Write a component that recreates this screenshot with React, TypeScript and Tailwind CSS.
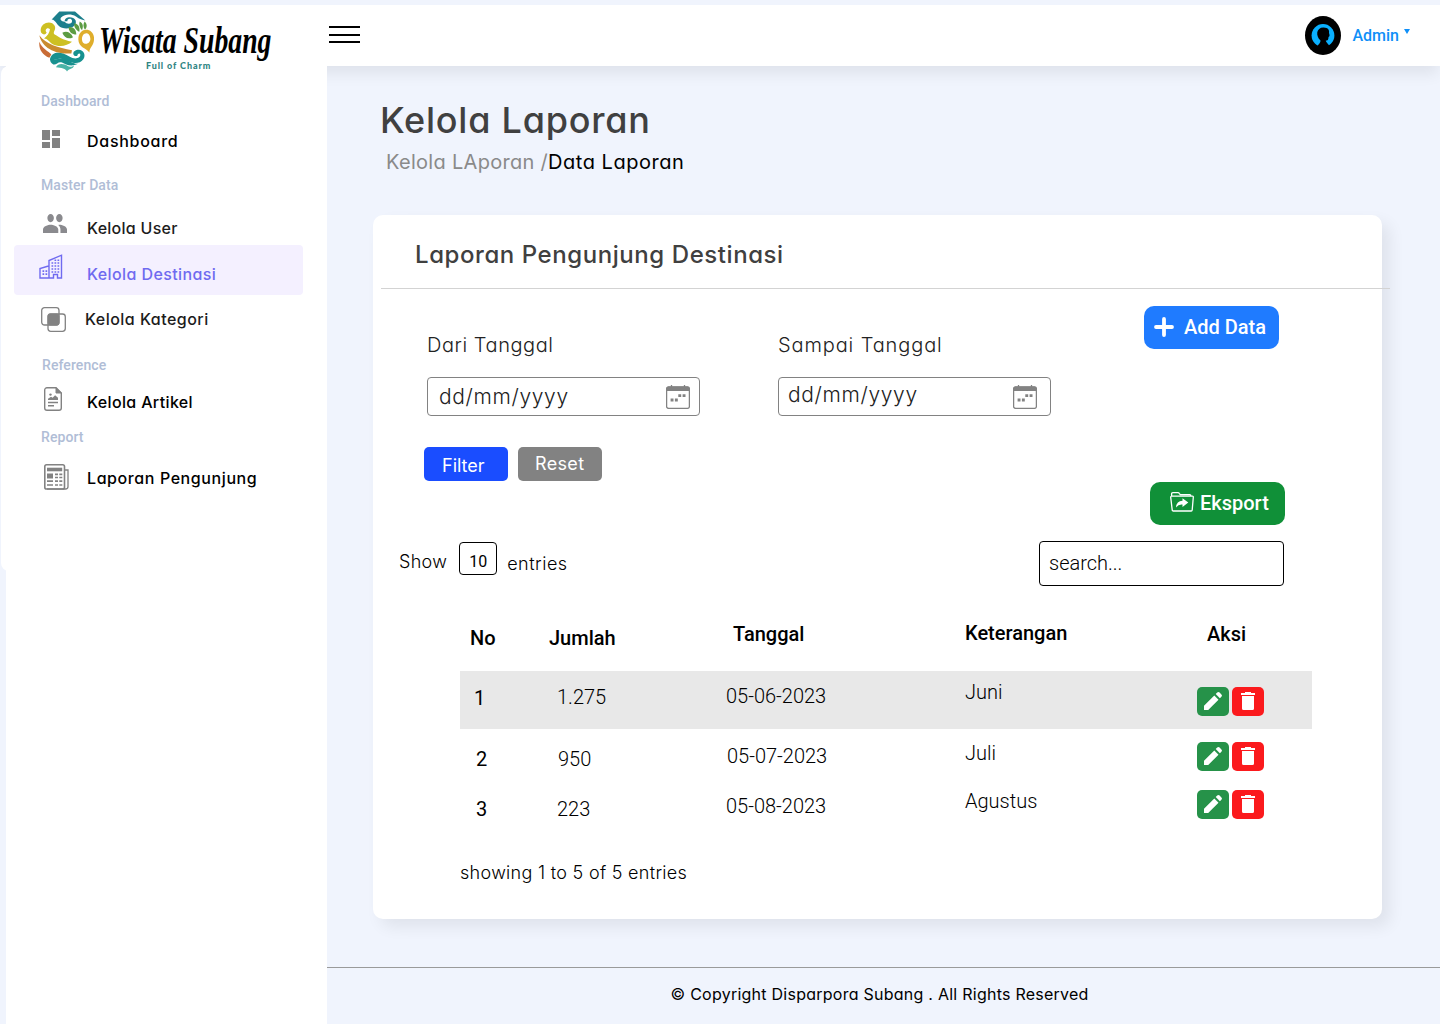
import React from "react";
import type { ReactNode } from "react";

function T({ className = "", children }: { className?: string; children: ReactNode }) {
  return <span className={"block w-max whitespace-nowrap " + className}>{children}</span>;
}

function LogoMark() {
  return (
    <svg viewBox="27 20 165 182" className="h-[61px] w-[55px] shrink-0" fill="none">
      <path d="M65 45 88 21H135L166 48C158 46 148 44 138 36C124 28 106 28 94 38C88 44 94 50 104 52C110 60 128 60 126 48C124 40 112 42 112 50L104 50C104 36 130 34 137 48C142 66 118 76 96 70C80 64 78 46 65 45Z" fill="#1c7f8c" />
      <path d="M32 78C32 52 66 46 74 64C80 76 66 84 74 90C86 96 96 106 126 112C112 126 84 128 68 119C56 112 54 102 42 102C52 94 58 86 60 74C52 66 42 76 50 84C46 94 32 90 32 78Z" fill="#cdc022" />
      <path d="M97 85C110 78 122 84 129 98C116 106 102 100 97 85ZM116 68C130 66 139 76 139 90C126 90 116 82 116 68ZM133 56C145 58 151 68 148 82C138 76 131 68 133 56ZM149 51C159 56 161 66 156 77C149 70 146 60 149 51ZM164 51C172 58 172 68 165 76C159 68 159 58 164 51Z" fill="#5c9c43" />
      <path fillRule="evenodd" d="M192 98C194 124 179 126 178 144C170 130 145 130 145 104C145 68 188 66 192 98ZM171 86C153 84 150 118 168 118C176 118 182 110 181 102C180 94 178 88 171 86Z" fill="#dfae2c" />
      <path d="M28 92C48 120 84 128 126 137L124 147C80 150 36 132 28 92Z" fill="#c98b2f" />
      <path d="M28 112C36 134 56 140 64 150L58 160C36 150 26 134 28 112Z" fill="#c96c36" />
      <path d="M60 164C66 138 96 142 118 156C134 166 152 162 151 150C149 144 142 148 142 154C130 158 124 142 138 137C158 130 170 150 160 164C144 186 114 170 98 164C84 160 76 166 64 168Z" fill="#17918f" />
      <path d="M60 162C72 168 82 162 98 162C116 164 122 178 144 178C122 188 108 180 96 174C84 170 80 182 70 180C62 176 60 170 60 162Z" fill="#17918f" />
      <path d="M78 188C84 174 104 178 112 184C118 188 126 188 132 182C130 196 116 190 111 201C108 192 94 190 78 188Z" fill="#48b3a6" />
    </svg>
  );
}

const icons = {
  dashboard: (
    <svg viewBox="0 0 18 18" className="mt-[8px] ml-[2px] h-[18px] w-[18px]" fill="#828282">
      <path d="M0 10h8V0H0zM0 18h8v-6H0zM10 18h8V8h-8zM10 0v6h8V0z" />
    </svg>
  ),
  people: (
    <svg viewBox="1 5 22 14" preserveAspectRatio="none" className="mt-[6px] ml-[3px] h-[19px] w-[24px]" fill="#8a8a8e">
      <path d="M16 11c1.66 0 2.99-1.34 2.99-3S17.66 5 16 5s-3 1.34-3 3 1.34 3 3 3m-8 0c1.66 0 2.99-1.34 2.99-3S9.66 5 8 5 5 6.34 5 8s1.34 3 3 3m0 2c-2.330 0-7 1.170-7 3.500V19h14v-2.500c0-2.330-4.670-3.500-7-3.500m8 0c-.290 0-.620.020-.970.050 1.160.840 1.970 1.970 1.970 3.450V19h6v-2.500c0-2.330-4.670-3.500-7-3.500" />
    </svg>
  ),
  buildings: (
    <svg viewBox="0 0 24 25" className="mt-[9px] -ml-px h-[25px] w-[24px]" fill="none" stroke="#6f6af0">
      <path d="M10 24H1V14.500L9.500 12M10 24V6.500L22.500 1.200V24H18.500V20.500H14.500V24H10Z" strokeWidth="1.400" />
      <path d="M3.500 17.200h5M3.500 20.200h5M12.500 9h8M12.500 12h8M12.500 15h8M12.500 18h8" strokeWidth="1.700" strokeDasharray="1.700 1.300" />
      <path d="M15.500 6.200h5" strokeWidth="1.500" strokeDasharray="1.700 1.300" />
    </svg>
  ),
  category: (
    <svg viewBox="0 0 25 25" className="mt-[12px] ml-px h-[25px] w-[25px]" fill="none" stroke="#828282">
      <rect x="0.700" y="0.700" width="17.300" height="17.300" rx="2.800" strokeWidth="1.300" />
      <rect x="7" y="7" width="17.300" height="17.300" rx="2.800" strokeWidth="1.300" />
      <rect x="7" y="7" width="11" height="11" rx="2" fill="#828282" />
    </svg>
  ),
  article: (
    <svg viewBox="0 0 18 24" className="mt-[7px] ml-[4px] h-[24px] w-[18px]" fill="none" stroke="#828282">
      <path d="M12 .7H3A2.300 2.300 0 0 0 .7 3v18A2.300 2.300 0 0 0 3 23.300h12a2.300 2.300 0 0 0 2.300-2.300V6Z" strokeWidth="1.400" />
      <path d="M12 .7V6h5.300Z" fill="#828282" />
      <path d="M4 13V11.800L7 9.800l1.600 1 2.500-2.500 2.900 2.500V13Z" fill="#828282" stroke="none" />
      <circle cx="6.500" cy="7.600" r="1.200" fill="#828282" stroke="none" />
      <path d="M4 15.500h10M4 18.800h6" strokeWidth="1.400" />
    </svg>
  ),
  report: (
    <svg viewBox="0 0 25 26" className="mt-[7px] ml-[4px] h-[26px] w-[25px]" fill="none" stroke="#828282">
      <path d="M20.500 6H24v16.500a2.500 2.500 0 0 1-2.500 2.500H3" strokeWidth="1.300" />
      <rect x=".8" y=".8" width="19.700" height="24.200" rx="1.800" strokeWidth="1.600" />
      <path d="M3 5.500h15.200" strokeWidth="3.600" />
      <path d="M3 12h6" strokeWidth="5" />
      <path d="M11 10.300h3M15.300 10.300h3M11 13.500h3M15.300 13.500h3M3 17.200h6M11 17.200h3M15.300 17.200h3M3 21h6M11 21h3M15.300 21h3" strokeWidth="1.700" />
    </svg>
  ),
};

function Calendar({ className }: { className: string }) {
  return (
    <svg viewBox="0 0 24 24" className={"h-6 w-6 " + className} fill="none" stroke="#828282">
      <rect x=".6" y="1.800" width="22.800" height="21.600" rx="2" strokeWidth="1.300" />
      <path d="M.5 6V3.500Q.5 1.500 2.500 1.500h19q2 0 2 2V6Z" fill="#828282" stroke="none" />
      <path d="M5.500 0v2M18.500 0v2" strokeWidth="1.300" />
      <path d="M12.300 10.600h2.900M16.600 10.600h2.900M4.600 15h2.900M8.900 15h2.900" strokeWidth="2.800" />
    </svg>
  );
}

const label = "font-['Roboto'] text-[14px] leading-5 font-medium text-[#b0bdd6]";

function Item({ icon, h, text, tone }: { icon: ReactNode; h: string; text: string; tone: string }) {
  return (
    <div className={"grid grid-cols-[47px_1fr] " + h}>
      <div>{icon}</div>
      <T className={"text-[16px] leading-5 font-medium " + tone}>{text}</T>
    </div>
  );
}

function Actions({ className }: { className: string }) {
  return (
    <div className={"flex gap-[3px] " + className}>
      <button className="flex h-[29px] w-8 justify-center rounded-[5px] bg-[#269249] pt-[5px]">
        <svg viewBox="0 0 18 18" className="h-[18px] w-[18px]" fill="#fff">
          <path d="M0 18v-4.200L10.300 3.500l4.200 4.200L4.200 18ZM11.700 2.100 13.200.6q1.200-1.100 2.400 0l1.800 1.800q1.100 1.200 0 2.400l-1.500 1.500Z" />
        </svg>
      </button>
      <button className="flex h-[29px] w-8 justify-center rounded-[5px] bg-[#fb1a1d] pt-[5px]">
        <svg viewBox="0 0 14 18" className="h-[18px] w-[14px]" fill="#fff">
          <path d="M0 1h4V0H10V1h4v2H0ZM1 4h12v12.500q0 1.500-1.500 1.500h-9Q1 18 1 16.500Z" />
        </svg>
      </button>
    </div>
  );
}

const rows = [
  { h: "h-[58px] bg-[#e8e8e8]", no: "1", noC: "pl-[14px] pt-[15px]", j: "1.275", jC: "pl-[8px] pt-[14px]", d: "05-06-2023", dC: "pt-[13px]", k: "Juni", kC: "pt-[9px]", a: "pt-[16px]" },
  { h: "h-[50px]", no: "2", noC: "pl-[16px] pt-[18px]", j: "950", jC: "pl-[9px] pt-[18px]", d: "05-07-2023", dC: "pl-px pt-[15px]", k: "Juli", kC: "pt-[12px]", a: "pt-[13px]" },
  { h: "h-[50px]", no: "3", noC: "pl-[16px] pt-[18px]", j: "223", jC: "pl-[8px] pt-[18px]", d: "05-08-2023", dC: "pt-[15px]", k: "Agustus", kC: "pt-[10px]", a: "pt-[11px]" },
];
const cols = "grid grid-cols-[89px_177px_239px_232px_115px]";

export default function App() {
  return (
    <div className="h-[1024px] w-[1440px] overflow-hidden bg-[#f0f4fd] pt-[5px] font-['Inter',sans-serif] text-black [font-feature-settings:'cv11']">
      <header className="flex h-[61px] items-start bg-white shadow-[0_10px_14px_-2px_rgba(0,0,0,0.07)]">
        <div className="relative z-30 ml-[39px] flex w-[290px] pt-[6px]">
          <LogoMark />
          <div className="w-[180px] pt-[11px] pl-[5px]">
            <T className="origin-left scale-x-[0.75] font-['Liberation_Serif'] text-[37px] leading-[38px] font-bold italic">Wisata Subang</T>
            <T className="ml-[47px] font-['Lato'] text-[9px] leading-[11px] font-black tracking-[0.9px] text-[#2f8583]">Full of Charm</T>
          </div>
        </div>
        <div className="mt-[21px] flex w-[31px] flex-col gap-[5.500px]">
          <i className="h-[2px] bg-black" />
          <i className="h-[2px] bg-black" />
          <i className="h-[2px] bg-black" />
        </div>
        <svg viewBox="0 0 36 39" className="mt-[11px] ml-auto h-[39px] w-[36px]">
          <ellipse cx="18" cy="19.500" rx="18" ry="19.500" fill="#000" />
          <circle cx="18" cy="19.500" r="11.400" fill="#0ab0ff" />
          <path d="M12 33C11.500 29 15.500 28 15.500 24.500C10.500 20 11 11.500 18.500 11.500C23.500 11.500 24.500 14.500 24 17C25 20 24.500 20.500 23.500 21C23.500 24 22.500 24.500 20.800 24.500C20.800 27 24.500 27.500 25 33Z" fill="#000" />
        </svg>
        <T className="mt-[21px] ml-[11.5px] w-[47px] font-['Roboto'] text-[16px] leading-5 font-medium text-[#0f8ff8]">Admin</T>
        <svg viewBox="0 0 6 5" className="mt-[24px] mr-[30.5px] ml-[4.5px] h-[5px] w-[6px]" fill="#0f8ff8"><path d="M0 0h6L3 5Z" /></svg>
      </header>

      <div className="flex">
        <aside className="relative ml-[6px] h-[958px] w-[321px] bg-white">
          <nav className="-ml-[5px] h-[505px] rounded-lg bg-white pt-[25px] pl-[39px]">
            <T className={label + " ml-px tracking-[0.08px]"}>Dashboard</T>
            <div className="pt-[11px]"><Item icon={icons.dashboard} h="h-[53px] [&>span]:pt-[9px]" text="Dashboard" tone="tracking-[0.72px]" /></div>
            <T className={label + " ml-px tracking-[0.08px]"}>Master Data</T>
            <div className="pt-[13px]"><Item icon={icons.people} h="h-[37px] [&>span]:pt-[10px]" text="Kelola User" tone="tracking-[0.27px] text-[#1c1c1c]" /></div>
            <div className="-ml-[26px] w-[289px] rounded-[4px] bg-[#f4f0ff] pl-[26px]"><Item icon={icons.buildings} h="h-[50px] [&>span]:pt-[19px]" text="Kelola Destinasi" tone="tracking-[0.4px] text-[#6f6af0]" /></div>
            <Item icon={icons.category} h="h-[60px] [&>span]:-ml-[2px] [&>span]:pt-[14px]" text="Kelola Kategori" tone="tracking-[0.47px] text-[#1c1c1c]" />
            <T className={label + " ml-[2px] tracking-[0.08px]"}>Reference</T>
            <div className="pt-[5px]"><Item icon={icons.article} h="h-[47px] [&>span]:pt-[12px]" text="Kelola Artikel" tone="tracking-[0.36px]" /></div>
            <T className={label + " ml-px tracking-[0.08px]"}>Report</T>
            <div className="pt-[10px]"><Item icon={icons.report} h="h-[40px] [&>span]:pt-[11px]" text="Laporan Pengunjung" tone="tracking-[0.59px]" /></div>
          </nav>
        </aside>

        <main className="flex w-[1113px] flex-col">
          <T className="mt-[34px] ml-[53px] text-[36px] leading-[40px] font-medium tracking-[0.77px] text-[#404040]">Kelola Laporan</T>
          <div className="mt-[10px] ml-[59px] flex text-[20px] leading-6">
            <T className="w-[163px] tracking-[0.3px] text-[#8a8a8a]">Kelola LAporan /</T>
            <T className="tracking-[0.52px]">Data Laporan</T>
          </div>

          <section className="mt-[41px] ml-[46px] h-[704px] w-[1009px] rounded-[10px] bg-white shadow-[8px_8px_16px_rgba(0,0,0,0.07)]">
            <h2 className="ml-2 h-[74px] w-[1009px] border-b border-[#d3d3d3] pt-[28px] pl-[34px]">
              <T className="text-[24px] leading-6 font-medium tracking-[0.57px] text-[#404040]">Laporan Pengunjung Destinasi</T>
            </h2>
            <div className="flex h-[143px] text-[20px] leading-6 font-light text-[#222]">
              <div className="ml-[54px] w-[273px] pt-[44px]">
                <T className="tracking-[0.55px]">Dari Tanggal</T>
                <div className="mt-5 flex h-[39px] rounded-[4px] border border-[#828282]">
                  <T className="mt-[7px] ml-[11px] text-[21px] tracking-[0.65px]">dd/mm/yyyy</T>
                  <Calendar className="mt-[7px] mr-[9px] ml-auto" />
                </div>
              </div>
              <div className="ml-[78px] w-[273px] pt-[44px]">
                <T className="tracking-[0.88px]">Sampai Tanggal</T>
                <div className="mt-5 flex h-[39px] rounded-[4px] border border-[#828282]">
                  <T className="mt-[5px] ml-[9px] text-[21px] tracking-[0.65px]">dd/mm/yyyy</T>
                  <Calendar className="mt-[7px] mr-[13px] ml-auto" />
                </div>
              </div>
              <button className="mt-[17px] ml-[93px] flex h-[43px] w-[135px] items-start rounded-[10px] bg-[#1f7bff] pt-[9px] pl-[10px] text-white">
                <svg viewBox="0 0 20 20" className="mt-[2px] h-5 w-5" stroke="#fff" strokeWidth="3.800" strokeLinecap="round"><path d="M10 2v16M2 10h16" /></svg>
                <T className="ml-[10px] font-['Roboto'] font-medium">Add Data</T>
              </button>
            </div>
            <div className="mt-[15px] ml-[51px] flex h-[34px] gap-[10px] text-[18px] leading-6 text-white">
              <button className="flex w-[84px] rounded-[5px] bg-[#1a4dff] pt-[7px] pl-[18px]"><T>Filter</T></button>
              <button className="flex w-[84px] rounded-[5px] bg-[#828282] pt-[5px] pl-[17px]"><T className="tracking-[0.35px]">Reset</T></button>
            </div>
            <button className="mt-px ml-[777px] flex h-[43px] w-[135px] rounded-[10px] bg-[#109038] pt-[9px] pl-5 text-white">
              <svg viewBox="0 0 24 20" className="mt-px h-5 w-6" fill="none" stroke="#fff" strokeWidth="1.300" strokeLinejoin="round">
                <path d="M2.300 18.700.7 5.200Q.7 4.200 1.500 4.200H22.500q.9 0 .8 1L22.200 18q-.1 1-1 1H3.200q-.8 0-.9-.9M1.600 4.200V2Q1.600.7 2.900.7h5q1 0 1.500.8l.8 1.200h9.500q1.200 0 1.300 1.500" />
                <path d="M6 15.500Q6.500 9 12.500 8.800V6.300L18.300 10.600 12.500 15V12.500Q8.500 12 6 15.500Z" fill="#fff" stroke="none" />
              </svg>
              <T className="ml-[6px] font-['Roboto'] text-[20px] leading-6 font-medium">Eksport</T>
            </button>
            <div className="mt-4 ml-[26px] flex h-[73px] text-[18px] leading-6 font-light">
              <T className="mt-[9px] w-[48px] tracking-[0.3px]">Show</T>
              <div className="mt-px ml-[12px] h-[33px] w-[38px] rounded-[4px] border border-black pt-[7px] pl-[9px]"><T className="font-['Roboto'] text-[16px] font-normal">10</T></div>
              <T className="mt-[11px] ml-[10px] tracking-[0.5px]">entries</T>
              <div className="mr-[98px] ml-auto h-[45px] w-[245px] rounded-[4px] border border-black pt-[9px] pl-[9px]"><T className="font-['Roboto'] text-[20px]">search...</T></div>
            </div>
            <div className="ml-[87px] w-[852px] font-['Roboto'] text-[20px] leading-6">
              <div className={cols + " h-[57px] font-medium"}>
                <T className="mt-[12px] ml-[10px]">No</T>
                <T className="mt-[12px]">Jumlah</T>
                <T className="mt-[8px] ml-[7px]">Tanggal</T>
                <T className="mt-[7px]">Keterangan</T>
                <T className="mt-[8px] ml-[10px]">Aksi</T>
              </div>
              {rows.map((r) => (
                <div key={r.no} className={cols + " font-light " + r.h}>
                  <T className={"font-normal " + r.noC}>{r.no}</T>
                  <T className={r.jC}>{r.j}</T>
                  <T className={r.dC}>{r.d}</T>
                  <T className={r.kC}>{r.k}</T>
                  <Actions className={r.a} />
                </div>
              ))}
            </div>
            <T className="mt-[32px] ml-[87px] text-[18px] leading-6 font-light tracking-[0.3px]">showing 1 to 5 of 5 entries</T>
          </section>

          <footer className="mt-[48px] h-[57px] border-t border-[#9a9a9a] pt-[16px] pl-[343.5px]">
            <T className="text-[16px] leading-5 tracking-[0.25px]">© Copyright Disparpora Subang . All Rights Reserved</T>
          </footer>
        </main>
      </div>
    </div>
  );
}
